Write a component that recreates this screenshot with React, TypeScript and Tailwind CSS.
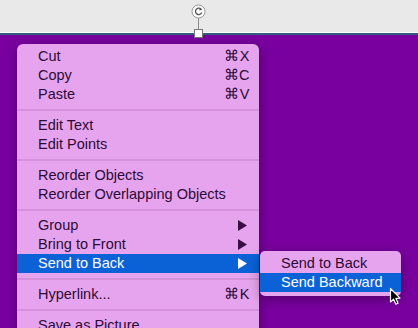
import React from "react";

const txt = "text-[#2c0a36]";

function Arrow({ white }: { white?: boolean }) {
  return (
    <svg width="9" height="11" viewBox="0 0 9 11" className="mr-[3px]">
      <path d="M0 0 L9 5.5 L0 11 Z" fill={white ? "#ffffff" : "#3a0c44"} />
    </svg>
  );
}

function Row({
  label,
  shortcut,
  sub,
  active,
}: {
  label: string;
  shortcut?: string;
  sub?: boolean;
  active?: boolean;
}) {
  return (
    <div
      className={`h-[19px] pl-[21px] pr-[9px] flex items-center justify-between ${
        active ? "bg-[#0b62d6] text-white" : txt
      }`}
    >
      <span>{label}</span>
      {shortcut && <span className="tracking-[0.5px]">{shortcut}</span>}
      {sub && <Arrow white={active} />}
    </div>
  );
}

function Sep() {
  return (
    <div className="h-[12px] flex flex-col justify-center">
      <div className="h-[2px] bg-[#d591dc]" />
    </div>
  );
}

export default function App() {
  return (
    <div
      className="relative w-[418px] h-[328px] overflow-hidden bg-[#79009f] text-[14.5px] leading-[19px]"
      style={{ fontFamily: '"Liberation Sans", Arial, sans-serif' }}
    >
      <div className="h-[32px] bg-[#e9e9e9]" />
      <div className="h-[1px] bg-[#ffffff]" />
      <div className="h-[2px] bg-[#2f5f7a]" />

      {/* rotation handle */}
      <svg className="absolute left-[190px] top-[3px]" width="18" height="36" viewBox="0 0 18 36">
        <line x1="8.5" y1="15" x2="8.5" y2="28" stroke="#8a8a8a" strokeWidth="1" />
        <circle cx="8.5" cy="8.5" r="6.5" fill="#ffffff" stroke="#9a9a9a" strokeWidth="1" />
        <path d="M11.3 6.5 A3.2 3.2 0 1 0 11.7 9.5" fill="none" stroke="#555" strokeWidth="1.3" />
        <path d="M9.8 4.6 L12.2 6.8 L9.3 7.6 Z" fill="#555" />
        <rect x="4.5" y="26.5" width="8" height="8" fill="#ffffff" stroke="#777" strokeWidth="1" />
      </svg>

      {/* main menu */}
      <div className="absolute left-[17px] top-[44px] w-[242px] h-[300px] rounded-[6px] bg-[#e6a4ee] pt-[3px] shadow-[0_3px_12px_rgba(0,0,0,0.35)]">
        <Row label="Cut" shortcut="⌘X" />
        <Row label="Copy" shortcut="⌘C" />
        <Row label="Paste" shortcut="⌘V" />
        <Sep />
        <Row label="Edit Text" />
        <Row label="Edit Points" />
        <Sep />
        <Row label="Reorder Objects" />
        <Row label="Reorder Overlapping Objects" />
        <Sep />
        <Row label="Group" sub />
        <Row label="Bring to Front" sub />
        <Row label="Send to Back" sub active />
        <Sep />
        <Row label="Hyperlink..." shortcut="⌘K" />
        <Sep />
        <Row label="Save as Picture" />
      </div>

      {/* submenu */}
      <div className="absolute left-[260px] top-[251px] w-[141px] rounded-[5px] bg-[#e6a4ee] pt-[3px] pb-[4px] shadow-[0_3px_12px_rgba(0,0,0,0.35)]">
        <div className={`h-[19px] pl-[21px] flex items-center ${txt}`}>Send to Back</div>
        <div className="h-[19px] pl-[21px] flex items-center bg-[#0b62d6] text-white">Send Backward</div>
      </div>

      {/* cursor */}
      <svg className="absolute left-[389px] top-[287px]" width="14" height="20" viewBox="0 0 14 20">
        <path
          d="M1.5 1.5 L1.5 15 L4.6 12.2 L6.8 17.2 L9 16.2 L6.9 11.3 L11 11.1 Z"
          fill="#000"
          stroke="#fff"
          strokeWidth="1.2"
          strokeLinejoin="round"
        />
      </svg>
    </div>
  );
}
